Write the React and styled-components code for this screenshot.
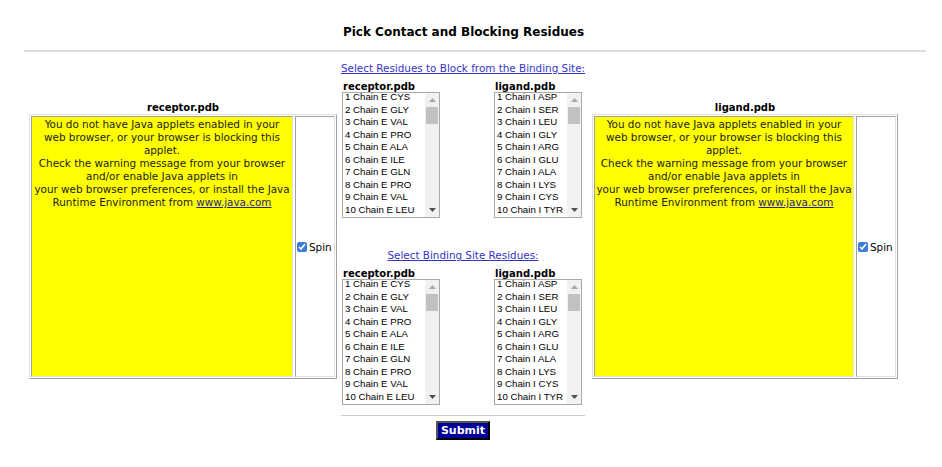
import React from "react";
import styled, { createGlobalStyle } from "styled-components";

const GlobalStyle = createGlobalStyle`
  body {
    margin: 8px;
    background: #ffffff;
    color: #000000;
    font-family: "DejaVu Sans", Verdana, sans-serif;
  }
`;

const receptorResidues = [
  "1 Chain E CYS",
  "2 Chain E GLY",
  "3 Chain E VAL",
  "4 Chain E PRO",
  "5 Chain E ALA",
  "6 Chain E ILE",
  "7 Chain E GLN",
  "8 Chain E PRO",
  "9 Chain E VAL",
  "10 Chain E LEU"
];

const ligandResidues = [
  "1 Chain I ASP",
  "2 Chain I SER",
  "3 Chain I LEU",
  "4 Chain I GLY",
  "5 Chain I ARG",
  "6 Chain I GLU",
  "7 Chain I ALA",
  "8 Chain I LYS",
  "9 Chain I CYS",
  "10 Chain I TYR"
];

const Arrow = ({ down, color }) => (
  <svg width="7" height="4" viewBox="0 0 7 4">
    <polygon
      points={down ? "0,0 7,0 3.5,4" : "0,4 7,4 3.5,0"}
      fill={color}
    />
  </svg>
);

const ListBox = ({ width, items }) => (
  <Box width={width}>
    <Items>
      {items.map(item => (
        <Item key={item}>{item}</Item>
      ))}
    </Items>
    <Track>
      <ArrowButton>
        <Arrow color="#a8a8a8" />
      </ArrowButton>
      <Thumb />
      <ArrowButton bottom>
        <Arrow down color="#505050" />
      </ArrowButton>
    </Track>
  </Box>
);

const ResidueLists = () => (
  <ListRow>
    <ListGroup>
      <ListLabel>receptor.pdb</ListLabel>
      <ListBox width={98} items={receptorResidues} />
    </ListGroup>
    <ListGroup>
      <ListLabel>ligand.pdb</ListLabel>
      <ListBox width={88} items={ligandResidues} />
    </ListGroup>
  </ListRow>
);

const AppletPanel = ({ title, width }) => (
  <SideColumn>
    <PanelTitle>{title}</PanelTitle>
    <AppletTable width={width}>
      <AppletCell>
        You do not have Java applets enabled in your
        <br />
        web browser, or your browser is blocking this
        <br />
        applet.
        <br />
        Check the warning message from your browser
        <br />
        and/or enable Java applets in
        <br />
        your web browser preferences, or install the Java
        <br />
        Runtime Environment from <JavaLink href="#">www.java.com</JavaLink>
      </AppletCell>
      <SpinCell>
        <SpinBox type="checkbox" defaultChecked />
        Spin
      </SpinCell>
    </AppletTable>
  </SideColumn>
);

const App = () => {
  return (
    <>
      <GlobalStyle />
      <Page>
        <Title>Pick Contact and Blocking Residues</Title>
        <Rule />
        <MainRow>
          <AppletPanel title="receptor.pdb" width={308} />
          <MiddleColumn>
            <SectionLink href="#">
              Select Residues to Block from the Binding Site:
            </SectionLink>
            <ResidueLists />
            <SectionLink href="#" spaced>
              Select Binding Site Residues:
            </SectionLink>
            <ResidueLists />
            <MiddleRule />
            <SubmitButton type="button">Submit</SubmitButton>
          </MiddleColumn>
          <AppletPanel title="ligand.pdb" width={306} />
        </MainRow>
      </Page>
    </>
  );
};

export default App;

const Page = styled.div`
  width: 911px;
`;

const Title = styled.div`
  margin-top: 17px;
  font-size: 12px;
  font-weight: bold;
  line-height: 15px;
  text-align: center;
`;

const Rule = styled.div`
  margin: 10px 0 0 16px;
  width: 902px;
  height: 2px;
  background: #dcdcdc;
`;

const MainRow = styled.div`
  display: flex;
  justify-content: center;
  align-items: flex-start;
  gap: 3px;
  margin-top: 10px;
`;

const SideColumn = styled.div`
  display: flex;
  flex-direction: column;
  align-items: center;
  padding-top: 40px;

  &:last-child {
    margin-left: 3px;
  }
`;

const PanelTitle = styled.div`
  font-size: 10px;
  font-weight: bold;
  line-height: 12px;
`;

const AppletTable = styled.div`
  display: flex;
  gap: 2px;
  width: ${props => props.width}px;
  box-sizing: border-box;
  padding: 1px;
  border: 1px solid;
  border-color: #e0e0e0 #a0a0a0 #a0a0a0 #e0e0e0;
`;

const AppletCell = styled.div`
  flex: 1;
  height: 258px;
  background: #ffff00;
  border: 1px solid;
  border-color: #a0a0a0 #e0e0e0 #e0e0e0 #a0a0a0;
  font-size: 10.4px;
  line-height: 13.05px;
  text-align: center;
  white-space: nowrap;
  color: #1a1a1a;
  padding-top: 1px;
  overflow: hidden;
`;

const JavaLink = styled.a`
  color: #26267a;
  text-decoration: underline;
`;

const SpinCell = styled.div`
  width: 38px;
  display: flex;
  align-items: center;
  border: 1px solid;
  border-color: #a0a0a0 #e0e0e0 #e0e0e0 #a0a0a0;
  font-size: 10.4px;
  background: #ffffff;
`;

const SpinBox = styled.input`
  width: 10px;
  height: 10px;
  margin: 0 2px 0 1px;
  accent-color: #3b7ddd;
`;

const MiddleColumn = styled.div`
  width: 246px;
  display: flex;
  flex-direction: column;
  align-items: stretch;
`;

const SectionLink = styled.a`
  display: block;
  margin-top: ${props => (props.spaced ? "31px" : "0")};
  font-size: 10.4px;
  line-height: 13px;
  text-align: center;
  color: #3434c6;
  text-decoration: underline;
`;

const ListRow = styled.div`
  display: flex;
  justify-content: space-between;
  padding: 0 4px 0 2px;
  margin-top: 6px;
`;

const ListGroup = styled.div`
  display: flex;
  flex-direction: column;
`;

const ListLabel = styled.div`
  font-size: 10px;
  font-weight: bold;
  line-height: 11px;
  padding-left: 1px;
`;

const Box = styled.div`
  display: flex;
  width: ${props => props.width}px;
  height: 126px;
  box-sizing: border-box;
  border: 1px solid #a9a9a9;
  background: #ffffff;
  overflow: hidden;
`;

const Items = styled.div`
  flex: 1;
  margin-top: -2px;
  overflow: hidden;
`;

const Item = styled.div`
  padding-left: 2px;
  font-family: "Liberation Sans", Arial, sans-serif;
  font-size: 9.7px;
  line-height: 12.55px;
  white-space: nowrap;
`;

const Track = styled.div`
  width: 14px;
  display: flex;
  flex-direction: column;
  background: #f1f1f1;
`;

const ArrowButton = styled.div`
  height: 14px;
  display: flex;
  align-items: center;
  justify-content: center;
  margin-top: ${props => (props.bottom ? "auto" : "0")};
`;

const Thumb = styled.div`
  height: 17px;
  margin: 0 1px;
  background: #c1c1c1;
`;

const MiddleRule = styled.div`
  margin: 10px 1px 0;
  height: 1px;
  background: #cccccc;
`;

const SubmitButton = styled.button`
  align-self: center;
  margin-top: 5px;
  padding: 0 3px;
  height: 19px;
  font-family: "DejaVu Sans", Verdana, sans-serif;
  font-size: 11px;
  font-weight: bold;
  color: #ffffff;
  background: #000099;
  border: 2px outset #555555;
  cursor: pointer;
`;
